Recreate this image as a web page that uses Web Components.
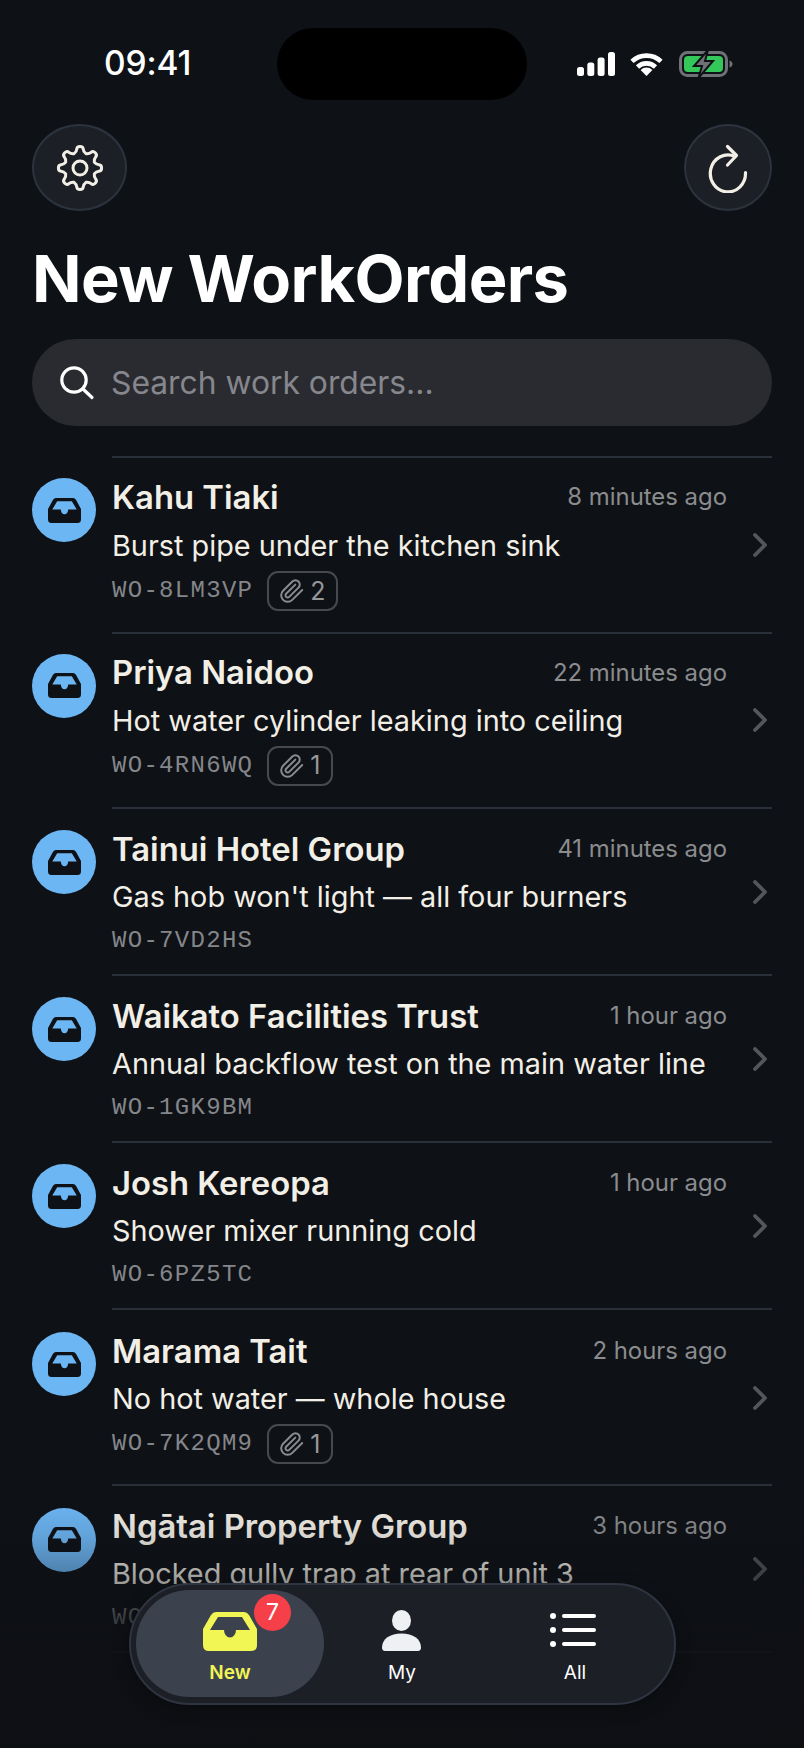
<!doctype html>
<html lang="en">
<head>
<meta charset="utf-8">
<title>New WorkOrders</title>
<style>
  html,body{margin:0;padding:0;background:#0e1116}
  body{font-family:Inter,"Noto Sans",sans-serif;color:#f2efe6}
</style>
</head>
<body>
<wo-app>
  <status-bar></status-bar>
  <top-actions></top-actions>
  <page-title>New WorkOrders</page-title>
  <search-bar>Search work orders...</search-bar>
  <wo-list>
    <wo-row name="Kahu Tiaki" time="8 minutes ago" subject="Burst pipe under the kitchen sink" code="WO-8LM3VP" clips="2"></wo-row>
    <wo-row name="Priya Naidoo" time="22 minutes ago" subject="Hot water cylinder leaking into ceiling" code="WO-4RN6WQ" clips="1"></wo-row>
    <wo-row name="Tainui Hotel Group" time="41 minutes ago" subject="Gas hob won't light — all four burners" code="WO-7VD2HS"></wo-row>
    <wo-row name="Waikato Facilities Trust" time="1 hour ago" subject="Annual backflow test on the main water line" code="WO-1GK9BM"></wo-row>
    <wo-row name="Josh Kereopa" time="1 hour ago" subject="Shower mixer running cold" code="WO-6PZ5TC"></wo-row>
    <wo-row name="Marama Tait" time="2 hours ago" subject="No hot water — whole house" code="WO-7K2QM9" clips="1"></wo-row>
    <wo-row name="Ngātai Property Group" time="3 hours ago" subject="Blocked gully trap at rear of unit 3" code="WO-"></wo-row>
  </wo-list>
  <tab-bar></tab-bar>
</wo-app>
<script>
const INBOX_D='M13 0H41Q44 0 46 3L54 17V33Q54 39 48 39H6Q0 39 0 33V17L8 3Q10 0 13 0ZM15 5L7 18H21A6 7.5 0 0 0 33 18H47L39 5Z';
function shadow(el,html){const r=el.attachShadow({mode:'open'});r.innerHTML=html;return r;}
function esc(s){return String(s==null?'':s).replace(/&/g,'&amp;').replace(/"/g,'&quot;').replace(/</g,'&lt;');}

customElements.define('wo-app',class extends HTMLElement{constructor(){super();shadow(this,`<style>
:host{display:block;position:relative;width:804px;height:1748px;overflow:hidden;background:#0e1116}
.fade{position:absolute;left:0;right:0;bottom:0;height:250px;pointer-events:none;z-index:1;
background:linear-gradient(to bottom,rgba(13,15,19,0) 0,rgba(13,15,19,.12) 40px,rgba(13,15,19,.4) 90px,rgba(13,15,19,.85) 155px,rgba(13,15,19,.9) 100%)}
</style><slot></slot><div class="fade"></div>`);}});

customElements.define('status-bar',class extends HTMLElement{constructor(){super();shadow(this,`<style>
:host{display:flex;align-items:center;box-sizing:border-box;height:100px;padding:28px 0 0 104px}
.time{width:173px;font:500 33.5px/1 Inter,sans-serif;color:#fff;letter-spacing:-.1px}
.island{width:250px;height:72px;border-radius:36px;background:#000}
.icons{display:flex;align-items:center;margin-left:50px}
svg{display:block}
</style>
<div class="time">09:41</div><div class="island"></div>
<div class="icons">
<svg width="38" height="24" viewBox="0 0 38 24" fill="#fff"><rect x="0" y="15" width="7" height="9" rx="2.5"/><rect x="10.3" y="10.5" width="7" height="13.5" rx="2.5"/><rect x="20.6" y="5.5" width="7" height="18.5" rx="2.5"/><rect x="31" y="0" width="7" height="24" rx="2.5"/></svg>
<svg style="margin-left:15px" width="33" height="24" viewBox="0 0 33 24" fill="none" stroke="#fff" stroke-width="4.6"><path d="M2 9.4A21 21 0 0 1 31 9.4"/><path d="M7.5 15A13 13 0 0 1 25.5 15"/><path d="M16.5 24L10.6 18A8.4 8.4 0 0 1 22.4 18Z" fill="#fff" stroke="none"/></svg>
<svg style="margin-left:16px" width="54" height="28" viewBox="0 0 54 28"><rect x="1.5" y="2.5" width="46" height="23" rx="7" fill="none" stroke="#707174" stroke-width="3"/><rect x="5" y="6" width="39" height="16" rx="4" fill="#34c759"/><path d="M50.5 10.5c2 .5 3 2 3 3.5s-1 3-3 3.5z" fill="#707174"/><path d="M29 0L15 16H23L19.5 28L34 11H26Z" fill="#707174" stroke="#0e1116" stroke-width="2"/></svg>
</div>`);}});

customElements.define('round-btn',class extends HTMLElement{constructor(){super();shadow(this,`<style>
:host{display:flex;align-items:center;justify-content:center;box-sizing:border-box;height:87px;border-radius:50%;background:#1c1f26;border:2px solid #2c333e}
::slotted(svg){display:block}
</style><slot></slot>`);}});

customElements.define('top-actions',class extends HTMLElement{constructor(){super();
let d='';const p=(r,a)=>{const t=a*Math.PI/180;return (25+r*Math.cos(t)).toFixed(2)+' '+(25+r*Math.sin(t)).toFixed(2);};
const mid=(r1,a1,r2,a2)=>{const t1=a1*Math.PI/180,t2=a2*Math.PI/180;return ((25+r1*Math.cos(t1)+25+r2*Math.cos(t2))/2).toFixed(2)+' '+((25+r1*Math.sin(t1)+25+r2*Math.sin(t2))/2).toFixed(2);};
for(let i=0;i<8;i++){const a=-90+i*45;
 if(i===0)d+='M'+p(15.5,a-22.5);
 d+='Q'+p(16.6,a-12)+' '+mid(16.6,a-12,21.8,a-8);
 d+='Q'+p(21.8,a-8)+' '+mid(21.8,a-8,21.8,a+8);
 d+='Q'+p(21.8,a+8)+' '+mid(21.8,a+8,16.6,a+12);
 d+='Q'+p(16.6,a+12)+' '+p(15.5,a+22.5);
}
d+='Z';
shadow(this,`<style>
:host{display:flex;justify-content:space-between;margin-top:24px;padding:0 32px}
round-btn{flex:none}
</style>
<round-btn style="width:95px"><svg width="50" height="50" viewBox="0 0 50 50" fill="none" stroke="#f2efe6" stroke-width="3" stroke-linejoin="round"><path d="${d}"/><circle cx="25" cy="25" r="7"/></svg></round-btn>
<round-btn style="width:88px"><svg width="50" height="50" viewBox="0 0 50 50" fill="none" stroke="#f2efe6" stroke-width="3.2" stroke-linecap="round" stroke-linejoin="round"><path d="M42.5 29.5A17.6 18.5 0 1 1 32 13.5"/><path d="M24.5 3.5L33.5 12.5L24.5 22"/></svg></round-btn>`);}});

customElements.define('page-title',class extends HTMLElement{constructor(){super();shadow(this,`<style>
:host{display:block;margin:28px 0 20px;padding-left:32px;font:700 65px/80px Inter,sans-serif;color:#fff;letter-spacing:-.6px;white-space:nowrap}
</style><slot></slot>`);}});

customElements.define('search-bar',class extends HTMLElement{constructor(){super();shadow(this,`<style>
:host{display:flex;align-items:center;box-sizing:border-box;margin:0 32px;height:87px;border-radius:44px;background:#2a2b30;padding-left:27px;color:#86878d;font:400 31.8px/1 Inter,sans-serif}
svg{display:block;flex:none;margin-right:16px}
</style><svg width="36" height="36" viewBox="0 0 36 36" fill="none" stroke="#fff" stroke-width="3.2" stroke-linecap="round"><circle cx="15" cy="15" r="12.2"/><path d="M24 24L33 32.5"/></svg><slot></slot>`);}});

customElements.define('wo-list',class extends HTMLElement{constructor(){super();shadow(this,`<style>
:host{display:block;margin-top:30px;padding:0 32px}
</style><slot></slot>`);}});

customElements.define('wo-row',class extends HTMLElement{constructor(){super();
const a=k=>esc(this.getAttribute(k));const clips=this.getAttribute('clips');
shadow(this,`<style>
:host{display:flex;align-items:flex-start;gap:16px}
.avatar{flex:none;width:64px;height:64px;margin-top:22px;border-radius:50%;background:#6db6f4;display:flex;align-items:center;justify-content:center}
:host(:nth-child(n+3)) .avatar{margin-top:23px}
:host(:nth-child(n+6)) .avatar{margin-top:24px}
.avatar svg{display:block}
.body{flex:1;min-width:0;display:flex;align-items:center;gap:26px;border-top:2px solid #2a303a;padding:16px 5px 15px 0}
:host(:nth-child(2)) .body{padding:15px 5px 16px 0}
:host(:nth-child(6)) .body{padding:17px 5px 14px 0}
:host(:last-child) .body{border-bottom:2px solid #2a303a}
.text{flex:1;min-width:0}
.top{display:flex;align-items:flex-start;justify-content:space-between;height:48px}
.name{font:560 32.8px/46px Inter,sans-serif;color:#f2efe6;white-space:nowrap}
:host(:nth-child(n+3)) .name{line-height:48px}
.time{font:400 23.9px/46px Inter,sans-serif;color:#8b8c8e;white-space:nowrap}
:host(:nth-child(n+2)) .time{line-height:48px}
.subject{font:400 28.85px/48px Inter,sans-serif;color:#f2efe6;white-space:nowrap}
.meta{display:flex;align-items:center;gap:14px;height:36px;padding-top:2px;color:#85868a}
.meta.has{height:45.5px;padding-top:1px;align-items:flex-start}
.code{font:400 24px/40px "Liberation Mono",monospace;letter-spacing:1.3px;white-space:nowrap}
.meta:not(.has) .code{line-height:36px}
.chip{display:flex;align-items:center;gap:5px;box-sizing:border-box;height:40px;border:2px solid #48494c;border-radius:11px;padding:0 10px;font:400 25px/1 Inter,sans-serif;color:#96979a}
.chip svg{display:block}
.chev{flex:none;display:block}
</style>
<div class="avatar"><svg width="33" height="25" viewBox="0 0 54 39" preserveAspectRatio="none"><path fill="#0e1116" fill-rule="evenodd" d="${INBOX_D}"/></svg></div>
<div class="body"><div class="text">
<div class="top"><span class="name">${a('name')}</span><span class="time">${a('time')}</span></div>
<div class="subject">${a('subject')}</div>
<div class="meta ${clips?'has':''}"><span class="code">${a('code')}</span>${clips?`<span class="chip"><svg width="26" height="26" viewBox="0 0 24 24" fill="none" stroke="#8b8c8e" stroke-width="1.8" stroke-linecap="round" stroke-linejoin="round"><path d="M21.44 11.05l-9.19 9.19a6 6 0 0 1-8.49-8.49l8.57-8.57A4 4 0 1 1 18 8.84l-8.59 8.57a2 2 0 0 1-2.83-2.83l8.49-8.48"/></svg>${esc(clips)}</span>`:''}</div>
</div>
<svg class="chev" width="14" height="24" viewBox="0 0 14 24" fill="none" stroke="#55565a" stroke-width="3.8" stroke-linecap="round" stroke-linejoin="round"><path d="M2 2L12 12L2 22"/></svg>
</div>`);}});

customElements.define('tab-item',class extends HTMLElement{constructor(){super();shadow(this,`<style>
:host{position:relative;display:flex;flex-direction:column;align-items:center;justify-content:flex-start;box-sizing:border-box;flex:none;height:107px;padding-top:20px;color:#fff;font:400 19px/24px Inter,sans-serif}
:host([active]){background:rgba(92,100,118,.5);border-radius:54px;color:#f1f655;font-weight:600}
.icon{height:41px;display:flex;align-items:flex-end;justify-content:center}
.label{margin-top:10px}
::slotted(svg){display:block}
</style><div class="icon"><slot name="icon"></slot></div><div class="label"><slot></slot></div><slot name="badge"></slot>`);}});

customElements.define('count-badge',class extends HTMLElement{constructor(){super();shadow(this,`<style>
:host{position:absolute;left:118px;top:4px;width:37px;height:37px;border-radius:50%;background:#f5404a;color:#fff;display:flex;align-items:center;justify-content:center;font:400 23px/1 Inter,sans-serif}
</style><slot></slot>`);}});

customElements.define('tab-bar',class extends HTMLElement{constructor(){super();shadow(this,`<style>
:host{position:absolute;z-index:2;left:129px;top:1583px;box-sizing:border-box;width:547px;height:122px;border-radius:61px;background:rgba(28,31,39,.985);border:2px solid #2e3440;padding:5px;display:flex;box-shadow:0 4px 16px rgba(0,0,0,.25)}
</style>
<tab-item active style="width:188px"><svg slot="icon" width="54" height="39" viewBox="0 0 54 39"><path fill="#f1f655" fill-rule="evenodd" d="${INBOX_D}"/></svg>New<count-badge slot="badge">7</count-badge></tab-item>
<tab-item style="width:156px"><svg slot="icon" style="margin-right:2px" width="39" height="41" viewBox="0 0 39 41" fill="#eef0f4"><ellipse cx="19.5" cy="10.5" rx="9.5" ry="10.5"/><path d="M0 37.5C0 29 8 23.5 19.5 23.5S39 29 39 37.5C39 39.5 38 41 36 41H3C1 41 0 39.5 0 37.5Z"/></svg>My</tab-item>
<tab-item style="width:190px"><svg slot="icon" style="margin-right:4px;margin-bottom:3px" width="46" height="36" viewBox="0 0 46 36" fill="#fff"><circle cx="3" cy="4" r="3"/><circle cx="3" cy="18" r="3"/><circle cx="3" cy="32" r="3"/><rect x="12" y="2" width="34" height="4" rx="2"/><rect x="12" y="16" width="34" height="4" rx="2"/><rect x="12" y="30" width="34" height="4" rx="2"/></svg>All</tab-item>`);}});
</script>
</body>
</html>
